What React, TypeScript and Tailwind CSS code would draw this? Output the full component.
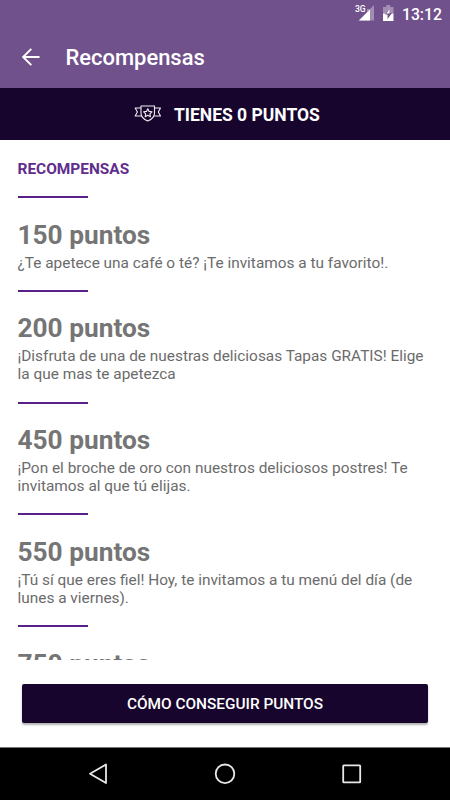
interface Reward {
  points: number;
  description: string;
}

const rewards: Reward[] = [
  { points: 150, description: "¿Te apetece una café o té? ¡Te invitamos a tu favorito!." },
  {
    points: 200,
    description: "¡Disfruta de una de nuestras deliciosas Tapas GRATIS! Elige la que mas te apetezca",
  },
  {
    points: 450,
    description: "¡Pon el broche de oro con nuestros deliciosos postres! Te invitamos al que tú elijas.",
  },
  {
    points: 550,
    description: "¡Tú sí que eres fiel! Hoy, te invitamos a tu menú del día (de lunes a viernes).",
  },
  { points: 750, description: "" },
];

function StatusBar() {
  return (
    <div className="flex h-[27px] shrink-0 items-center justify-end pr-[9px] text-white">
      <svg width="20" height="18" viewBox="0 0 20 18" className="mr-[8px]">
        <path d="M19 0v15.500H3.500L12 7V4h3z" fill="#fff" fillOpacity=".35" />
        <path d="M15 4.500v11H4z" fill="#fff" />
        <text x="0" y="7" fontSize="8.500" fontWeight="500" fill="#fff" className="font-[Roboto]">
          3G
        </text>
      </svg>
      <svg width="11" height="18" viewBox="0 0 11 18" className="mr-[8px]">
        <path d="M3.200 0h4V2H10.500V8.500H0V2h3.200z" fill="#fff" fillOpacity=".35" />
        <path d="M0 8.500h10.500v7.500H0z" fill="#fff" />
        <path d="M6.500 4v4h2.500L4.500 14v-4.500H2z" fill="#70518b" />
        <path d="M6.500 4v4.500H3.500z" fill="#fff" />
      </svg>
      <span className="mr-[-1px] pt-px text-[15.800px] leading-[27px] font-medium">13:12</span>
    </div>
  );
}

function ShieldIcon() {
  return (
    <svg
      width="28"
      height="18"
      viewBox="0 0 28 18"
      fill="none"
      stroke="#f0edf3"
      strokeWidth="1.1"
      strokeLinejoin="round"
    >
      <path d="M7 1h13.500v7c0 4-3 6.500-6.750 8-3.750-1.500-6.750-4-6.750-8z" />
      <path d="M7 3H1.200l2.200 4-2.200 4h6M20.500 3h6l-2.200 4 2.200 4h-6.200" />
      <path d="M13.800 3.700l1.300 2.700 2.900.4-2.100 2 .5 2.900-2.600-1.400-2.600 1.400.5-2.900-2.100-2 2.900-.4z" />
    </svg>
  );
}

function Divider() {
  return <div className="h-[2px] w-[70px] bg-[#582088]" />;
}

function RewardItem({ points, description }: Reward) {
  return (
    <li className="pt-[21.500px]">
      <h3 className="text-[26.25px] leading-[31px] font-bold text-[#757575]">{points} puntos</h3>
      <p className="mt-[4px] mb-[17.400px] text-[15.4px] leading-[17.950px] text-[#6b6b6b]">
        {description}
      </p>
      <Divider />
    </li>
  );
}

export default function App() {
  return (
    <div className="flex h-[800px] w-[450px] flex-col overflow-hidden bg-white font-[Roboto,sans-serif]">
      <header className="h-[88px] shrink-0 bg-[#70518b]">
        <StatusBar />
        <div className="flex h-[60px] items-center pl-[22px] text-white">
          <svg width="18" height="18" viewBox="0 0 18 18" fill="none" stroke="#fff" strokeWidth="1.9">
            <path d="M17.500 9H1.500M9.300 .8L1.200 9l8.100 8.200" />
          </svg>
          <h1 className="ml-[25.500px] pt-[2px] text-[21.950px] leading-[26px] font-medium">Recompensas</h1>
        </div>
      </header>

      <div className="flex h-[52px] shrink-0 items-center bg-[#17052e] pl-[134px] text-white">
        <ShieldIcon />
        <span className="ml-[12px] pt-[2px] text-[17.500px] font-bold">TIENES 0 PUNTOS</span>
      </div>

      <main className="h-[520px] shrink-0 overflow-hidden px-[17.500px] pt-[20px]">
        <h2 className="mb-[18px] text-[15.450px] leading-[18px] font-bold text-[#5f2e8d]">RECOMPENSAS</h2>
        <Divider />
        <ul>
          {rewards.map((r) => (
            <RewardItem key={r.points} {...r} />
          ))}
        </ul>
      </main>

      <div className="h-[87px] shrink-0 px-[22px] pt-[24px]">
        <button
          type="button"
          className="h-[39px] w-full rounded-[2px] bg-[#17052e] pt-[2px] text-[15.38px] font-medium text-white shadow-[0_2px_2px_rgba(0,0,0,0.3)]"
        >
          CÓMO CONSEGUIR PUNTOS
        </button>
      </div>

      <nav className="flex h-[53px] shrink-0 items-center justify-between border-t border-[#777] bg-black pr-[87.500px] pl-[87px]">
        <svg width="22" height="22" viewBox="0 0 22 22" fill="none" stroke="#e8e8e8" strokeWidth="1.8">
          <path d="M19 1.500v18.500L3 10.800z" strokeLinejoin="round" />
        </svg>
        <svg width="22" height="22" viewBox="0 0 22 22" fill="none" stroke="#e8e8e8" strokeWidth="1.8">
          <circle cx="11" cy="10.800" r="9.300" />
        </svg>
        <svg width="22" height="22" viewBox="0 0 22 22" fill="none" stroke="#e8e8e8" strokeWidth="1.8">
          <rect x="2.200" y="2.300" width="17" height="17" rx=".6" />
        </svg>
      </nav>
    </div>
  );
}
